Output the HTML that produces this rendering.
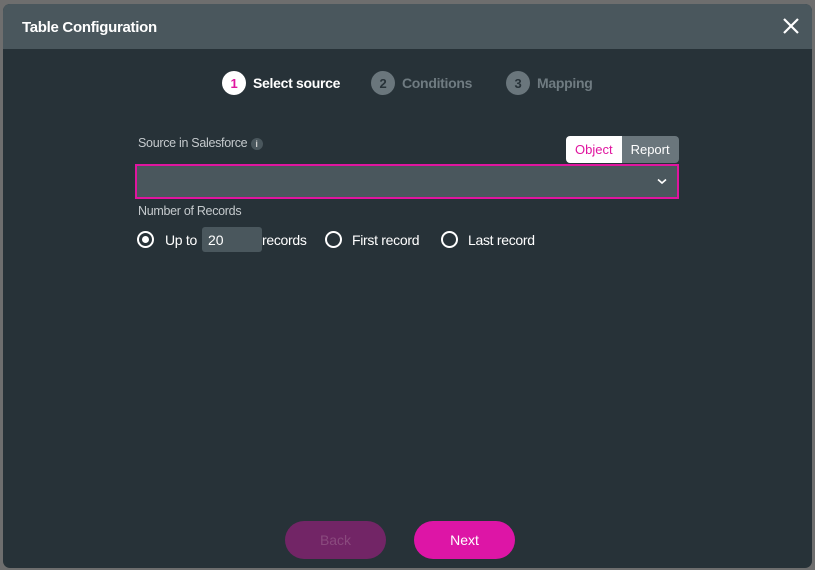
<!DOCTYPE html>
<html><head><style>
*{box-sizing:border-box;margin:0;padding:0}
body{width:815px;height:570px;background:#6e6e6e;font-family:"Liberation Sans",sans-serif;position:relative;overflow:hidden}
.dlg{position:absolute;left:3px;top:4px;width:809px;height:564px;background:#273238;border-radius:7px;overflow:hidden}
.hdr{height:45px;background:#4a575d;position:relative}
.hdr .t{position:absolute;left:19px;top:15px;color:#fff;font-weight:bold;font-size:15px;letter-spacing:-0.3px}
.x{position:absolute;left:779px;top:13px}
.step{position:absolute;top:71px;display:flex;align-items:center;font-size:14px;font-weight:bold;letter-spacing:-0.3px}
.c{width:24px;height:24px;border-radius:50%;display:flex;align-items:center;justify-content:center;font-size:13px;margin-right:7px}
.lbl{position:absolute;color:#c5cacd;font-size:12.5px;letter-spacing:-0.3px}
.sel{position:absolute;left:135px;top:164px;width:544px;height:35px;border:2px solid #e0159f;background:#4a575d}
.tog{position:absolute;left:566px;top:136px;height:27px;display:flex;border-radius:4px;overflow:hidden;font-size:13px}
.tog div{padding:6px 9px 0;height:27px}
.radio{position:absolute;width:17px;height:17px;border:2px solid #fff;border-radius:50%;top:231px}
.rt{position:absolute;top:232px;color:#fff;font-size:14px;letter-spacing:-0.3px}
.btn{position:absolute;top:521px;width:101px;height:38px;border-radius:19px;display:flex;align-items:center;justify-content:center;font-size:14px}
</style></head><body>
<div class="dlg">
<div class="hdr"><div class="t">Table Configuration</div>
<svg class="x" width="18" height="18" viewBox="0 0 18 18"><path d="M2 2L16 16M16 2L2 16" stroke="#fff" stroke-width="2.2"/></svg></div>
</div>
<div class="step" style="left:222px"><div class="c" style="background:#fff;color:#e0159f">1</div><span style="color:#fff">Select source</span></div>
<div class="step" style="left:371px"><div class="c" style="background:#6a767c;color:#273238">2</div><span style="color:#6f7b81">Conditions</span></div>
<div class="step" style="left:506px"><div class="c" style="background:#6a767c;color:#273238">3</div><span style="color:#6f7b81">Mapping</span></div>
<div class="lbl" style="left:138px;top:136px">Source in Salesforce <span style="display:inline-block;width:12px;height:12px;border-radius:50%;background:#4a575d;color:#ccc;font-size:9px;text-align:center;line-height:12px;font-weight:bold">i</span></div>
<div class="tog"><div style="background:#fff;color:#e0159f">Object</div><div style="background:#6a767c;color:#fff">Report</div></div>
<div class="sel"><svg style="position:absolute;right:10px;top:12px" width="10" height="7" viewBox="0 0 10 7"><path d="M1 1.5L5 5L9 1.5" stroke="#fff" stroke-width="1.6" fill="none"/></svg></div>
<div class="lbl" style="left:138px;top:204px">Number of Records</div>
<div class="radio" style="left:137px"><div style="width:7px;height:7px;background:#fff;border-radius:50%;margin:3px"></div></div>
<div class="rt" style="left:165px">Up to</div>
<div style="position:absolute;left:202px;top:227px;width:60px;height:25px;background:#4a575d;border-radius:3px;color:#fff;font-size:14px;padding:5px 6px">20</div>
<div class="rt" style="left:262px">records</div>
<div class="radio" style="left:325px"></div><div class="rt" style="left:352px">First record</div>
<div class="radio" style="left:441px"></div><div class="rt" style="left:468px">Last record</div>
<div class="btn" style="left:285px;background:#722566;color:#8a4a7e">Back</div>
<div class="btn" style="left:414px;background:#dd15a6;color:#fff">Next</div>
</body></html>
